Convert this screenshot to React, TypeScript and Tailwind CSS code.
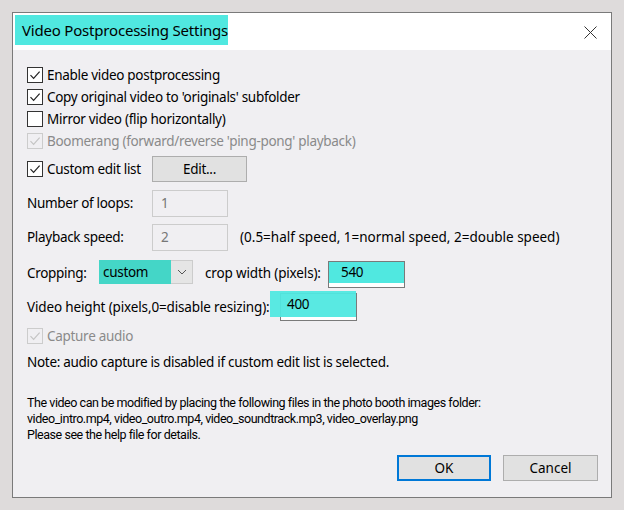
import React from "react";

const font = "font-['Segoe_UI','Noto_Sans',sans-serif]";

const Check = ({ checked, disabled }: { checked: boolean; disabled?: boolean }) => (
  <span
    className={`flex h-[16px] w-[16px] shrink-0 items-center justify-center border ${
      disabled ? "border-[#cccccc] bg-[#f0eff2]" : "border-[#333333] bg-white"
    }`}
  >
    {checked && (
      <svg width="12" height="12" viewBox="0 0 12 12">
        <path
          d="M1.5 6.2 L4.6 9.3 L10.6 2.6"
          fill="none"
          stroke={disabled ? "#c4c4c4" : "#222222"}
          strokeWidth="1.2"
        />
      </svg>
    )}
  </span>
);

const CheckRow = ({ label, checked, disabled }: { label: string; checked: boolean; disabled?: boolean }) => (
  <div className="flex h-[22px] items-center gap-[4px]">
    <Check checked={checked} disabled={disabled} />
    <span className={disabled ? "text-[#8a8a8a]" : "text-black"}>{label}</span>
  </div>
);

const DisabledField = ({ value }: { value: string }) => (
  <div className="flex h-[27px] w-[76px] items-center border border-[#cccccc] bg-[#f0eff2] pl-[8px] text-[#777777]">
    {value}
  </div>
);

export default function App() {
  return (
    <div
      className={`h-[510px] w-[624px] bg-[#dedbdb] pl-[12px] pt-[12px] text-[13.5px] tracking-[-0.3px] text-black ${font}`}
    >
      <div className="flex h-[486px] w-[600px] flex-col border border-[#7a7a7a] bg-[#f0eff2]">
        {/* title bar */}
        <div className="flex h-[37px] shrink-0 items-start justify-between bg-white">
          <div className="ml-[2px] mt-[2px] flex h-[30px] w-[213px] items-center whitespace-nowrap bg-[#50e8e0] pl-[7px] text-[15px] tracking-[-0.2px]">
            Video Postprocessing Settings
          </div>
          <svg className="mr-[14px] mt-[13px]" width="13" height="13" viewBox="0 0 13 13">
            <path d="M0.5 0.5 L12.5 12.5 M12.5 0.5 L0.5 12.5" stroke="#333" strokeWidth="1" />
          </svg>
        </div>

        <div className="flex flex-col pl-[14px] pt-[14px]">
          <CheckRow label="Enable video postprocessing" checked />
          <CheckRow label="Copy original video to 'originals' subfolder" checked />
          <CheckRow label="Mirror video (flip horizontally)" checked={false} />
          <CheckRow label="Boomerang (forward/reverse 'ping-pong' playback)" checked disabled />

          <div className="mt-[4px] flex h-[26px] items-center">
            <div className="flex w-[125px] items-center gap-[4px]">
              <Check checked />
              <span>Custom edit list</span>
            </div>
            <button className="h-[26px] w-[95px] border border-[#adadad] bg-[#e1e1e1]">Edit...</button>
          </div>

          <div className="mt-[8px] flex items-center">
            <span className="w-[125px]">Number of loops:</span>
            <DisabledField value="1" />
          </div>

          <div className="mt-[7px] flex items-center">
            <span className="w-[125px]">Playback speed:</span>
            <DisabledField value="2" />
            <span className="ml-[12px] tracking-normal">(0.5=half speed, 1=normal speed, 2=double speed)</span>
          </div>

          <div className="mt-[9px] flex h-[28px] items-start">
            <span className="mt-[3px] w-[72px]">Cropping:</span>
            <div className="flex h-[24px] w-[94px] border border-[#cccccc] bg-[#e5e5e5]">
              <div className="-ml-px -mt-px flex h-[24px] w-[72px] items-center bg-[#44d6c7] pl-[4px]">custom</div>
              <div className="flex flex-1 items-center justify-center">
                <svg width="10" height="6" viewBox="0 0 10 6">
                  <path d="M1 1 L5 5 L9 1" fill="none" stroke="#555" strokeWidth="1" />
                </svg>
              </div>
            </div>
            <span className="ml-[12px] mt-[3px] w-[123px] tracking-[-0.15px]">crop width (pixels):</span>
            <div className="mt-[1px] h-[27px] w-[77px] border border-[#7a7a7a] bg-white">
              <div className="flex h-[21px] items-center bg-[#50e8e0] pl-[12px]">540</div>
            </div>
          </div>

          <div className="mt-[5px] flex h-[28px] items-center">
            <span className="w-[253px] tracking-[-0.15px]">Video height (pixels,0=disable resizing):</span>
            <div className="relative h-[28px] w-[77px] border border-[#7a7a7a] bg-white">
              <div className="absolute left-[-11px] top-[-3px] flex h-[26px] w-[86px] items-center bg-[#50e8e0]/95 pl-[17px]">
                400
              </div>
            </div>
          </div>

          <div className="mt-[4px]">
            <CheckRow label="Capture audio" checked disabled />
          </div>
          <div className="mt-[4px] flex h-[22px] items-center">
            Note: audio capture is disabled if custom edit list is selected.
          </div>

          <div className="mt-[22px] flex flex-col font-['Roboto',sans-serif] text-[12.5px] leading-[16px] tracking-[-0.45px]">
            <span>The video can be modified by placing the following files in the photo booth images folder:</span>
            <span>video_intro.mp4, video_outro.mp4, video_soundtrack.mp3, video_overlay.png</span>
            <span>Please see the help file for details.</span>
          </div>

          <div className="mt-[12px] flex justify-end gap-[12px] pr-[13px] tracking-normal">
            <button className="h-[26px] w-[94px] border-2 border-[#0078d7] bg-[#e1e1e1]">OK</button>
            <button className="h-[26px] w-[95px] border border-[#adadad] bg-[#e1e1e1]">Cancel</button>
          </div>
        </div>
      </div>
    </div>
  );
}
